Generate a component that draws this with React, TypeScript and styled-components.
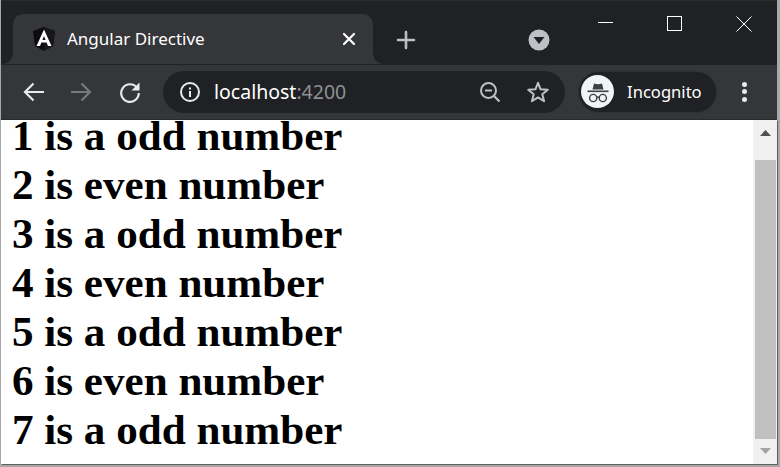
import React from "react";
import styled, { createGlobalStyle } from "styled-components";

const Global = createGlobalStyle`
  html, body { margin: 0; padding: 0; width: 780px; height: 467px; overflow: hidden; background: #a8a8a8; }
  #root { width: 780px; height: 467px; }
`;

const Frame = styled.div`
  width: 780px; height: 467px; box-sizing: border-box;
  padding: 0 3px 3px 1px;
  background: #a8a8a8;
  display: flex; flex-direction: column;
  font-family: "Noto Sans", "Open Sans", sans-serif;
`;
const TitleBar = styled.div`
  height: 65px; flex: none; background: #202124;
  display: flex; align-items: flex-start; position: relative;
  padding: 14px 0 0 12px;
  box-sizing: border-box;
  border-top: 1px solid #2b2b2d;
`;
const Tab = styled.div`
  width: 360px; height: 50px; margin-top: -1px; box-sizing: border-box;
  background: #35363a; border-radius: 10px 10px 0 0;
  display: flex; align-items: center; padding: 0 14px 1px 19px;
  color: #fff;
  position: relative;
  &::before, &::after {
    content: ""; position: absolute; bottom: 0; width: 10px; height: 10px;
  }
  &::before { left: -10px; background: radial-gradient(circle at 0 0, #202124 9.5px, #35363a 10px); }
  &::after { right: -10px; background: radial-gradient(circle at 100% 0, #202124 9.5px, #35363a 10px); }
`;
const TabTitle = styled.span`
  flex: 1; margin-left: 11px;
  font-size: 17px; white-space: nowrap;
`;
const Ic = styled.svg`display: block; flex: none;`;
const TabGap = styled.div`
  width: 40px; margin-left: 23px; height: 50px; display: flex; align-items: center; justify-content: flex-start; flex: none;
`;
const SearchTabs = styled.div`
  margin-left: 92px; height: 50px; flex: none; display: flex; align-items: center;
`;
const WindowControls = styled.div`
  display: flex; position: absolute; right: -1px; top: 0;
`;
const WinBtn = styled.div`
  width: 69px; height: 46px; display: flex; align-items: center; justify-content: center;
`;
const Toolbar = styled.div`
  height: 55px; flex: none; background: #35363a; box-sizing: border-box;
  border-bottom: 1px solid #2a2a2c;
  display: flex; align-items: center; padding: 0 0 1px 0;
`;
const NavBtn = styled.div`
  width: 48px; height: 40px; flex: none; display: flex; align-items: center; justify-content: center;
`;
const NavGroup = styled.div`
  display: flex; padding-left: 9px;
`;
const Omnibox = styled.div`
  margin-left: 9px; width: 402px; height: 42px; flex: none; box-sizing: border-box;
  background: #202124; border-radius: 21px;
  display: flex; align-items: center; padding: 0 15px 0 16px;
`;
const Url = styled.div`
  flex: 1; margin-left: 13px; font-size: 19.5px; color: #fff; white-space: nowrap;
`;
const Port = styled.span`color: #8e9094;`;
const OmniIcons = styled.div`display: flex; gap: 25px; align-items: center;`;
const Profile = styled.div`
  margin-left: 13px; width: 139px; height: 42px; box-sizing: border-box; flex: none;
  background: #202124; border-radius: 21px; border: 1px solid #2e2f33;
  display: flex; align-items: center; padding-left: 2px;
  color: #fff; font-size: 16.6px;
`;
const Avatar = styled.div`
  width: 33px; height: 33px; border-radius: 50%; background: #f1f3f4; flex: none;
  display: flex; align-items: center; justify-content: center;
`;
const ProfileName = styled.span`margin-left: 13px;`;
const MenuBtn = styled.div`
  margin-left: 25px; display: flex; flex-direction: column; gap: 2.5px; flex: none;
`;
const Dot = styled.i`
  display: block; width: 5px; height: 5px; border-radius: 50%; background: #e8eaed;
`;
const Viewport = styled.div`
  flex: 1; display: flex; background: #fff; min-height: 0;
  box-shadow: 1px 1px 0 #5f5f5f;
`;
const Content = styled.main`
  flex: 1; padding: 0 0 0 11px;
`;
const Line = styled.h1`
  margin: 0 0 18px; font-family: "Liberation Serif", "Times New Roman", serif;
  font-weight: 700; font-size: 43.1px; line-height: 31px; color: #000; white-space: nowrap;
`;
const Scrollbar = styled.div`
  width: 24px; flex: none; background: #f0f0f0; display: flex; flex-direction: column;
`;
const ScrollBtn = styled.div<{ $h: number; $pad: number }>`
  height: ${(p) => p.$h}px; flex: none; box-sizing: border-box; padding-bottom: ${(p) => p.$pad}px;
  display: flex; align-items: center; justify-content: center;
`;
const Thumb = styled.div`
  width: 21px; flex: 1; background: #c0c0c0; margin-left: 2px;
`;

const lines = [
  "1 is a odd number", "2 is even number", "3 is a odd number", "4 is even number",
  "5 is a odd number", "6 is even number", "7 is a odd number",
];

export default function App() {
  return (
    <Frame>
      <Global />
      <TitleBar>
        <Tab>
          <Ic width="24" height="26" viewBox="0 0 24 26">
            <path d="M12 1 L1 5 L3 20 L12 25 L21 20 L23 5 Z" fill="#0c0c10" />
            <path d="M12 1 L23 5 L21 20 L12 25 Z" fill="#16161b" />
            <path d="M12 3.5 L4.5 20 H8 L9.4 16.6 H14.6 L16 20 H19.5 Z M10.4 14 L12 10 L13.6 14 Z" fill="#fff" fillRule="evenodd" />
          </Ic>
          <TabTitle>Angular Directive</TabTitle>
          <Ic width="20" height="20" viewBox="0 0 20 20">
            <path d="M5 5 L15 15 M15 5 L5 15" stroke="#fff" strokeWidth="2.2" strokeLinecap="round" />
          </Ic>
        </Tab>
        <TabGap>
          <Ic width="20" height="20" viewBox="0 0 20 20">
            <path d="M10 2 V18 M2 10 H18" stroke="#bdc1c6" strokeWidth="2.6" strokeLinecap="round" />
          </Ic>
        </TabGap>
        <SearchTabs>
          <Ic width="22" height="22" viewBox="0 0 22 22">
            <circle cx="11" cy="11" r="10.5" fill="#bdc1c6" />
            <path d="M5.5 8 H16.5 L11 15 Z" fill="#202124" />
          </Ic>
        </SearchTabs>
        <WindowControls>
          <WinBtn>
            <Ic width="16" height="16" viewBox="0 0 16 16"><path d="M0 6.5 H15" stroke="#fff" strokeWidth="1" /></Ic>
          </WinBtn>
          <WinBtn>
            <Ic width="16" height="16" viewBox="0 0 16 16"><rect x="0.5" y="0.5" width="14" height="14" fill="none" stroke="#fff" strokeWidth="1" /></Ic>
          </WinBtn>
          <WinBtn>
            <Ic width="16" height="16" viewBox="0 0 16 16"><path d="M0.5 0.5 L15.5 15.5 M15.5 0.5 L0.5 15.5" stroke="#fff" strokeWidth="1" /></Ic>
          </WinBtn>
        </WindowControls>
      </TitleBar>
      <Toolbar>
        <NavGroup>
          <NavBtn>
            <Ic width="24" height="24" viewBox="0 0 24 24"><path d="M22 12 H4 M11.5 3.5 L3 12 L11.5 20.5" fill="none" stroke="#e8eaed" strokeWidth="2.2" /></Ic>
          </NavBtn>
          <NavBtn>
            <Ic width="24" height="24" viewBox="0 0 24 24"><path d="M1 12 H19 M11.5 3.5 L20 12 L11.5 20.5" fill="none" stroke="#77797c" strokeWidth="2.2" /></Ic>
          </NavBtn>
          <NavBtn>
            <Ic width="24" height="24" viewBox="0 0 24 24">
              <path d="M19.2 8 A8.8 8.8 0 1 0 20.8 13" fill="none" stroke="#e8eaed" strokeWidth="2.2" />
              <path d="M21.5 2.5 V10.5 H13.5 Z" fill="#e8eaed" />
            </Ic>
          </NavBtn>
        </NavGroup>
        <Omnibox>
          <Ic width="22" height="22" viewBox="0 0 22 22">
            <circle cx="11" cy="11" r="9" fill="none" stroke="#e8eaed" strokeWidth="2" />
            <rect x="10" y="10" width="2" height="6" fill="#e8eaed" />
            <rect x="10" y="6.5" width="2" height="2" fill="#e8eaed" />
          </Ic>
          <Url>localhost<Port>:4200</Port></Url>
          <OmniIcons>
            <Ic width="22" height="22" viewBox="0 0 22 22">
              <circle cx="9.5" cy="9.5" r="7.5" fill="none" stroke="#bdc1c6" strokeWidth="2" />
              <path d="M15 15 L20.5 20.5" stroke="#bdc1c6" strokeWidth="2.2" />
              <path d="M6 9.5 H13" stroke="#bdc1c6" strokeWidth="2" />
            </Ic>
            <Ic width="24" height="24" viewBox="0 0 24 24">
              <path d="M12 2.8 L14.6 9.3 L21.8 9.8 L16.3 14.3 L18.1 21.2 L12 17.4 L5.9 21.2 L7.7 14.3 L2.2 9.8 L9.4 9.3 Z" fill="none" stroke="#bdc1c6" strokeWidth="2" strokeLinejoin="round" />
            </Ic>
          </OmniIcons>
        </Omnibox>
        <Profile>
          <Avatar>
            <Ic width="24" height="24" viewBox="0 0 24 24">
              <path d="M6.5 9.5 L8 3.5 Q12 5 16 3.5 L17.5 9.5 Z" fill="#3c4043" />
              <rect x="1.5" y="10.5" width="21" height="1.6" fill="#3c4043" />
              <circle cx="7.2" cy="18" r="3.6" fill="none" stroke="#3c4043" strokeWidth="1.4" />
              <circle cx="16.8" cy="18" r="3.6" fill="none" stroke="#3c4043" strokeWidth="1.4" />
              <path d="M10.8 17.5 Q12 16.6 13.2 17.5" fill="none" stroke="#3c4043" strokeWidth="1.4" />
            </Ic>
          </Avatar>
          <ProfileName>Incognito</ProfileName>
        </Profile>
        <MenuBtn><Dot /><Dot /><Dot /></MenuBtn>
      </Toolbar>
      <Viewport>
        <Content>
          {lines.map((l) => <Line key={l}>{l}</Line>)}
        </Content>
        <Scrollbar>
          <ScrollBtn $h={40} $pad={14}>
            <Ic width="11" height="7" viewBox="0 0 11 7"><path d="M5.5 0 L11 6 H0 Z" fill="#505050" /></Ic>
          </ScrollBtn>
          <Thumb />
          <ScrollBtn $h={25} $pad={0}>
            <Ic width="11" height="7" viewBox="0 0 11 7"><path d="M0 0 H11 L5.5 6 Z" fill="#a3a3a3" /></Ic>
          </ScrollBtn>
        </Scrollbar>
      </Viewport>
    </Frame>
  );
}
